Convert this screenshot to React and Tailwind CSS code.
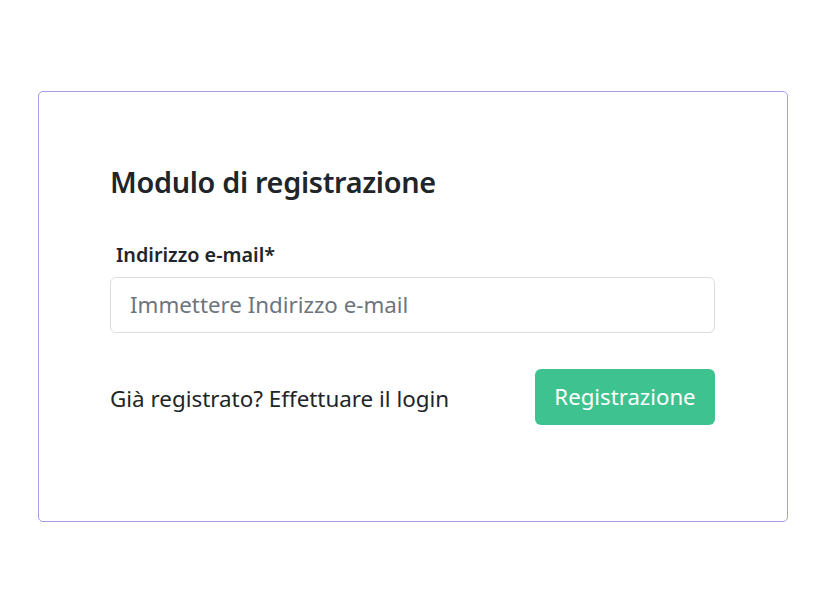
export default function App() {
  return (
    <div className="min-h-[614px] w-[819px] bg-white pt-[91px] pl-[38px]" style={{ fontFamily: '"Noto Sans", "Open Sans", sans-serif' }}>
      <div className="w-[750px] h-[431px] rounded-[5px] border border-[#a39ee6] bg-white pl-[71px] pr-[72px] pt-[70px]">
        <h1 className="text-[28.8px] font-semibold text-[#212529] leading-[40px] tracking-[-0.3px]">Modulo di registrazione</h1>
        <label className="block mt-[39px] ml-[6px] text-[19.8px] font-semibold text-[#212529] leading-[28px]">Indirizzo e-mail*</label>
        <div className="mt-[8px] h-[56px] w-[605px] rounded-[6px] border border-[#dcdcdc] flex items-center pl-[19px] text-[22.3px] text-[#6c757d]">
          Immettere Indirizzo e-mail
        </div>
        <div className="mt-[36px] w-[605px] flex items-center justify-between">
          <span className="text-[22.4px] text-[#212529] pt-[3px]">Già registrato? Effettuare il login</span>
          <button className="h-[56px] w-[180px] rounded-[6px] bg-[#3ec28f] text-white text-[22.2px]">Registrazione</button>
        </div>
      </div>
    </div>
  );
}
